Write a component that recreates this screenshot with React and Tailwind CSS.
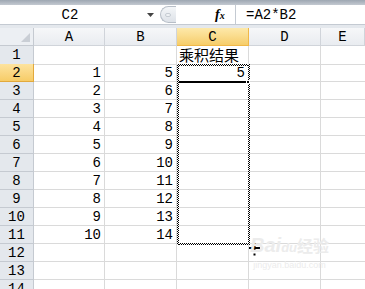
const cols = ['A', 'B', 'C', 'D', 'E']

const rows = [
  { n: 1, a: '', b: '', c: '乘积结果' },
  { n: 2, a: '1', b: '5', c: '5' },
  { n: 3, a: '2', b: '6' },
  { n: 4, a: '3', b: '7' },
  { n: 5, a: '4', b: '8' },
  { n: 6, a: '5', b: '9' },
  { n: 7, a: '6', b: '10' },
  { n: 8, a: '7', b: '11' },
  { n: 9, a: '8', b: '12' },
  { n: 10, a: '9', b: '13' },
  { n: 11, a: '10', b: '14' },
  { n: 12 },
  { n: 13 },
  { n: 14 },
]

const gridCols = 'grid grid-cols-[34px_71px_72px_72px_72px_1fr]'
const ants = 'absolute bg-[repeating-conic-gradient(#000_0_25%,#fff_0_50%)] bg-[length:2px_2px]'

function App() {
  return (
    <div className="relative w-[365px] h-[289px] overflow-hidden bg-white font-['Liberation_Mono','Noto_Sans_CJK_SC',monospace] text-[14px] text-black">
      <div className="h-[5px] bg-gradient-to-b from-[#9ea7b2] to-[#c3c9d1]" />

      {/* formula bar */}
      <div className="flex h-[20px] items-center bg-white border-b border-[#c4cad2]">
        <div className="w-[140px] text-center leading-none">C2</div>
        <svg width="7" height="4" viewBox="0 0 7 4" className="ml-[7px]">
          <path d="M0 0h7L3.5 4z" fill="#444" />
        </svg>
        <div className="ml-[6px] h-[17px] w-[16px] rounded-l-full border border-r-0 border-[#b7bec7] bg-gradient-to-b from-[#f4f6f8] to-[#dde2e8] flex items-center pl-[4px]">
          <div className="h-[4px] w-[6px] rounded-full bg-[#eef1f4] border border-[#c6ccd3]" />
        </div>
        <div className="ml-[39px] w-[20px] font-['Liberation_Serif',serif] italic font-bold text-[14px] leading-none">
          f<span className="text-[10px]">x</span>
        </div>
        <div className="h-[20px] w-px bg-[#c4cad2]" />
        <div className="ml-[10px] leading-none">=A2*B2</div>
      </div>
      <div className="h-[3px] bg-[#e4e8ed]" />

      {/* column headers */}
      <div className={`${gridCols} h-[18px]`}>
        <div className="relative border-r border-b border-[#c5cad1] bg-[#eceff3]">
          <svg width="9" height="9" viewBox="0 0 9 9" className="absolute right-[3px] bottom-[3px]">
            <path d="M9 0V9H0z" fill="#c9ced5" />
          </svg>
        </div>
        {cols.map((c) => (
          <div
            key={c}
            className={
              c === 'C'
                ? 'flex items-center justify-center border-r border-b border-[#f0b848] bg-gradient-to-b from-[#fde9aa] to-[#f6cd69] leading-none'
                : 'flex items-center justify-center border-r border-b border-[#d0d4da] bg-gradient-to-b from-[#f6f7f9] to-[#e9ecf0] leading-none'
            }
          >
            {c}
          </div>
        ))}
      </div>

      {/* rows */}
      {rows.map((r) => (
        <div key={r.n} className={`${gridCols} h-[18px]`}>
          <div
            className={
              r.n === 2
                ? 'flex items-center justify-center border-r border-b border-[#e2a93c] bg-gradient-to-b from-[#fde39e] to-[#f7cc67] leading-none'
                : 'flex items-center justify-center border-r border-b border-[#c5cad1] bg-[#e4e8ed] leading-none'
            }
          >
            {r.n}
          </div>
          <div className="flex items-center justify-end pr-[3px] border-r border-b border-[#dadada] leading-none">{r.a}</div>
          <div className="flex items-center justify-end pr-[3px] border-r border-b border-[#dadada] leading-none">{r.b}</div>
          <div
            className={
              r.n === 1
                ? 'flex items-end overflow-visible whitespace-nowrap pl-[2px] border-r border-b border-[#dadada] text-[15px] leading-[18px] font-["Noto_Sans_CJK_SC",sans-serif]'
                : 'flex items-center justify-end pr-[3px] border-r border-b border-[#dadada] leading-none'
            }
          >
            {r.c}
          </div>
          <div className="border-r border-b border-[#dadada]" />
          <div className="border-b border-[#dadada]" />
        </div>
      ))}

      {/* copy selection (marching ants) C2:C11 */}
      <div className={`${ants} left-[177px] top-[64px] w-[73px] h-[2px]`} />
      <div className={`${ants} left-[177px] top-[243px] w-[73px] h-[2px]`} />
      <div className={`${ants} left-[177px] top-[64px] w-[2px] h-[181px]`} />
      <div className={`${ants} left-[248px] top-[64px] w-[2px] h-[181px]`} />

      {/* active cell edge + fill handle */}
      <div className="absolute left-[179px] top-[81px] w-[67px] h-[2px] bg-black" />
      <div className="absolute left-[246px] top-[80px] w-[4px] h-[4px] bg-black border border-white" />

      {/* cursor */}
      <svg width="11" height="14" viewBox="0 0 11 14" className="absolute left-[249px] top-[243px]">
        <path d="M4.5 0h2v4H11v2H6.5v3h-2V6H0V4h4.5z" fill="#000" />
        <rect x="4.5" y="10.5" width="2" height="2" fill="#000" />
      </svg>

      {/* watermark */}
      <div className="absolute left-[250px] top-[235px] flex flex-col items-center text-[#ececec] font-['Liberation_Sans',sans-serif] pointer-events-none">
        <div className="text-[20px] font-bold italic leading-none">
          Bai<span className="text-[13px]">du</span><span className="font-['Noto_Sans_CJK_SC',sans-serif] not-italic text-[16px]">经验</span>
        </div>
        <div className="text-[9px] leading-none mt-[6px]">jingyan.baidu.com</div>
      </div>
    </div>
  )
}

export default App
